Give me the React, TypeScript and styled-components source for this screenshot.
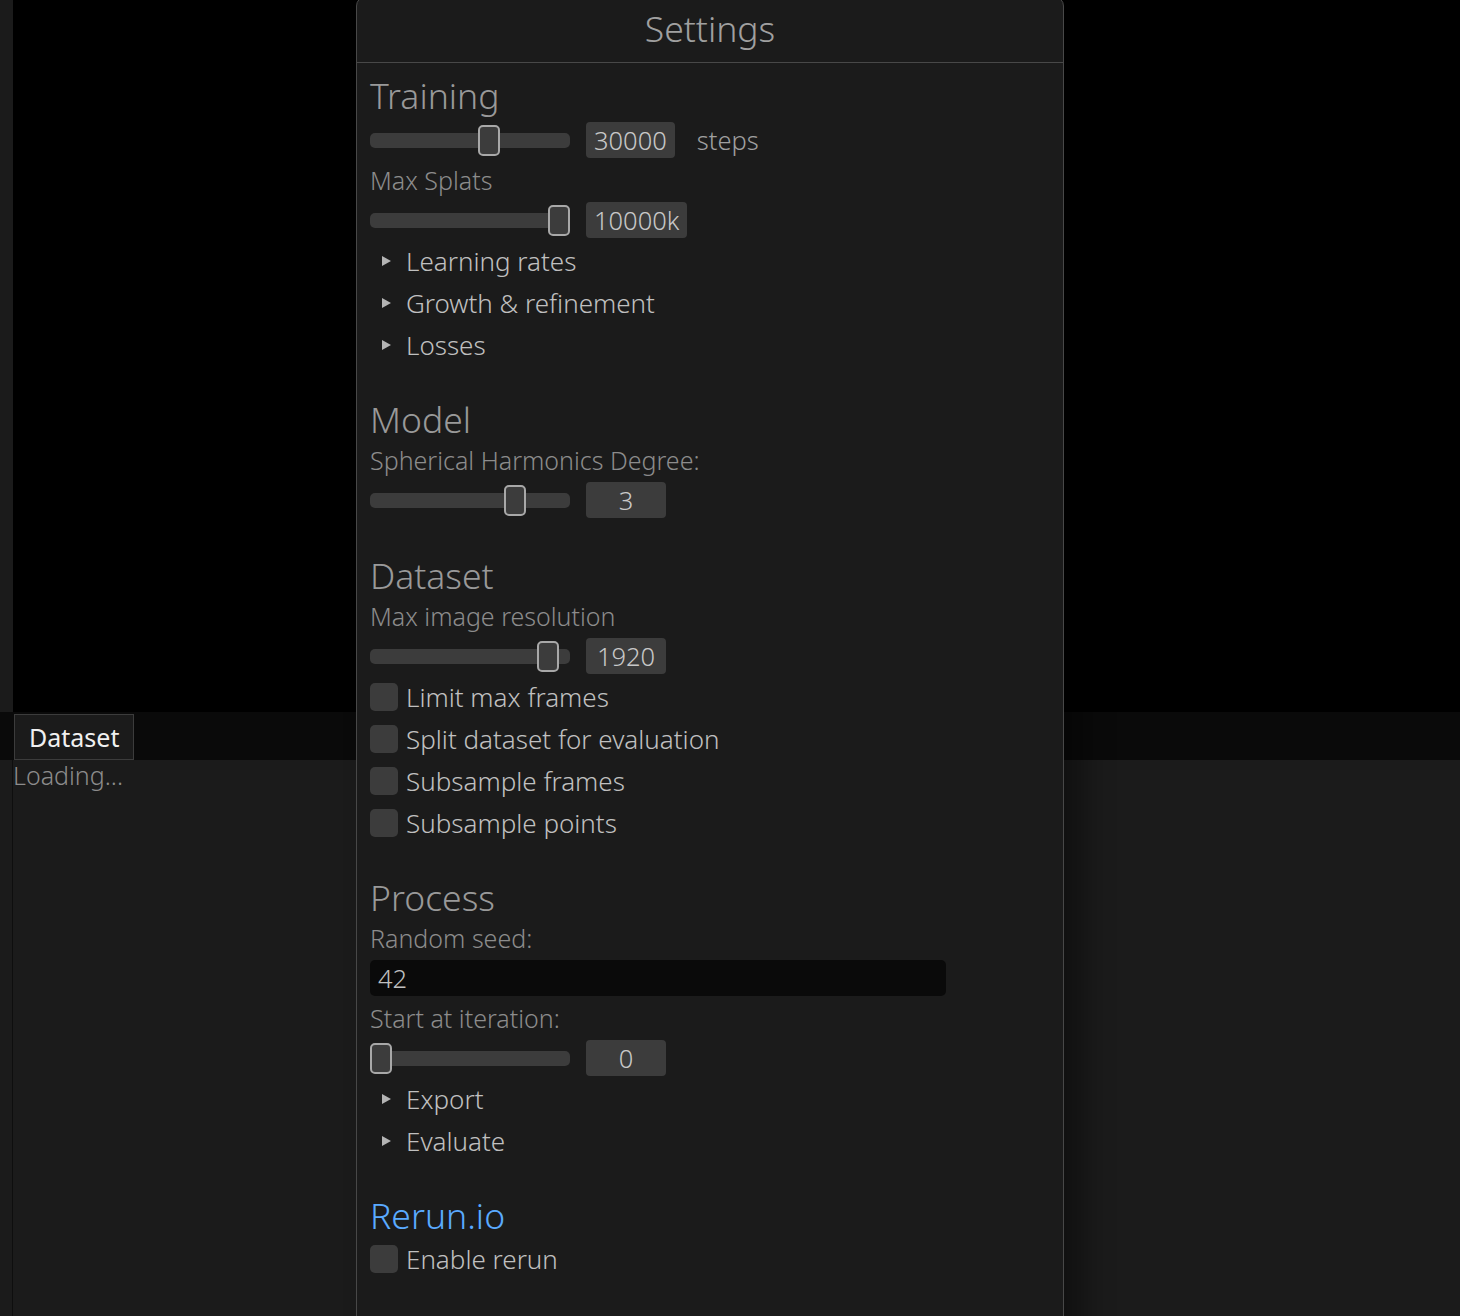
import React, {FC} from 'react';
import styled, {createGlobalStyle} from 'styled-components';

const FONT = `"Noto Sans", "Open Sans", "DejaVu Sans", sans-serif`;

const GlobalStyle = createGlobalStyle`
  html, body {
    margin: 0;
    padding: 0;
    background: #000;
    overflow: hidden;
  }
  * {
    box-sizing: border-box;
  }
`;

type SliderProps = { frac: number; value: string; unit?: string };

const Slider: FC<SliderProps> = ({frac, value, unit}) => (
    <SliderRow>
        <Track>
            <Handle style={{left: `${frac * 178}px`}}/>
        </Track>
        <ValueBox>{value}</ValueBox>
        {unit && <Unit>{unit}</Unit>}
    </SliderRow>
);

const Collapsing: FC<{ title: string }> = ({title}) => (
    <CollapseRow>
        <Arrow/>
        <WidgetText>{title}</WidgetText>
    </CollapseRow>
);

const Check: FC<{ label: string }> = ({label}) => (
    <CheckRow>
        <CheckBox/>
        <WidgetText>{label}</WidgetText>
    </CheckRow>
);

const App: FC = () => {
    return (
        <>
            <GlobalStyle/>
            <Screen>
                <TopArea>
                    <SideStrip/>
                    <Viewport/>
                </TopArea>
                <TabBar>
                    <Tab>Dataset</Tab>
                </TabBar>
                <BottomArea>
                    <SideStrip $divider/>
                    <DataPanel>
                        <Loading>Loading...</Loading>
                    </DataPanel>
                </BottomArea>

                <Window>
                    <TitleBar>Settings</TitleBar>
                    <Content>
                        <Heading $first>Training</Heading>
                        <Slider frac={0.607} value="30000" unit="steps"/>
                        <Label>Max Splats</Label>
                        <Slider frac={1} value="10000k"/>
                        <Collapsing title="Learning rates"/>
                        <Collapsing title="Growth & refinement"/>
                        <Collapsing title="Losses"/>

                        <Heading>Model</Heading>
                        <Label>Spherical Harmonics Degree:</Label>
                        <Slider frac={0.75} value="3"/>

                        <Heading>Dataset</Heading>
                        <Label>Max image resolution</Label>
                        <Slider frac={0.94} value="1920"/>
                        <Check label="Limit max frames"/>
                        <Check label="Split dataset for evaluation"/>
                        <Check label="Subsample frames"/>
                        <Check label="Subsample points"/>

                        <Heading>Process</Heading>
                        <Label>Random seed:</Label>
                        <TextInput>42</TextInput>
                        <Label>Start at iteration:</Label>
                        <Slider frac={0} value="0"/>
                        <Collapsing title="Export"/>
                        <Collapsing title="Evaluate"/>

                        <Heading $link>Rerun.io</Heading>
                        <Check label="Enable rerun"/>
                    </Content>
                </Window>
            </Screen>
        </>
    );
};

const Screen = styled.div`
  position: relative;
  width: 1460px;
  height: 1316px;
  display: flex;
  flex-direction: column;
  overflow: hidden;
  font-family: ${FONT};
  font-weight: 300;
`;

const TopArea = styled.div`
  height: 712px;
  display: flex;
`;

const SideStrip = styled.div<{ $divider?: boolean }>`
  width: 13px;
  background: #1b1b1b;
  border-right: 1px solid ${p => p.$divider ? '#0e0e0e' : '#1b1b1b'};
`;

const Viewport = styled.div`
  flex: 1;
  background: #000;
`;

const TabBar = styled.div`
  height: 48px;
  background: #0a0a0a;
  display: flex;
  align-items: flex-start;
  padding: 2px 0 0 14px;
`;

const Tab = styled.div`
  height: 46px;
  padding: 0 14px;
  display: flex;
  align-items: center;
  background: #1b1b1b;
  border: 1px solid #3c3c3c;
  color: #f0f0f0;
  font-size: 25px;
  font-weight: 400;
`;

const BottomArea = styled.div`
  flex: 1;
  display: flex;
`;

const DataPanel = styled.div`
  flex: 1;
  background: #1b1b1b;
  padding: 1px 0 0 0;
`;

const Loading = styled.div`
  color: #8c8c8c;
  font-size: 25px;
  line-height: 28px;
`;

const Window = styled.div`
  position: absolute;
  left: 356px;
  top: -4px;
  width: 708px;
  height: 1340px;
  background: #1b1b1b;
  border: 1px solid #484848;
  border-radius: 10px;
  box-shadow: 20px 40px 30px rgba(0, 0, 0, 0.38);
  display: flex;
  flex-direction: column;
`;

const TitleBar = styled.div`
  height: 66px;
  flex-shrink: 0;
  display: flex;
  align-items: center;
  justify-content: center;
  border-bottom: 1px solid #484848;
  color: #a0a0a0;
  font-size: 35.5px;
  padding-bottom: 4px;
`;

const Content = styled.div`
  display: flex;
  flex-direction: column;
  align-items: flex-start;
  gap: 8px;
  padding: 12px 13px;
`;

const Heading = styled.div<{ $first?: boolean; $link?: boolean }>`
  height: 39px;
  display: flex;
  align-items: center;
  margin-top: ${p => p.$first ? 0 : 29}px;
  color: ${p => p.$link ? '#5aaaff' : '#999999'};
  font-size: 35.5px;
`;

const Label = styled.div`
  height: 28px;
  display: flex;
  align-items: center;
  color: #8c8c8c;
  font-size: 25px;
`;

const SliderRow = styled.div`
  height: 36px;
  display: flex;
  align-items: center;
`;

const Track = styled.div`
  position: relative;
  width: 200px;
  height: 15px;
  border-radius: 5px;
  background: #3c3c3c;
`;

const Handle = styled.div`
  position: absolute;
  top: -8px;
  width: 22px;
  height: 31px;
  border-radius: 5px;
  border: 2px solid #a8a8a8;
  background: #3c3c3c;
`;

const ValueBox = styled.div`
  margin-left: 16px;
  min-width: 80px;
  height: 36px;
  padding: 0 8px;
  border-radius: 4px;
  background: #3c3c3c;
  color: #c8c8c8;
  font-size: 25.5px;
  display: flex;
  align-items: center;
  justify-content: center;
`;

const Unit = styled.div`
  margin-left: 22px;
  color: #a0a0a0;
  font-size: 25.5px;
`;

const CollapseRow = styled.div`
  height: 34px;
  display: flex;
  align-items: center;

  ${SliderRow} + & {
    margin-top: -2px;
  }
`;

const Arrow = styled.div`
  width: 0;
  height: 0;
  margin: 0 15px 0 12px;
  border-top: 5px solid transparent;
  border-bottom: 5px solid transparent;
  border-left: 9px solid #b4b4b4;
`;

const WidgetText = styled.span`
  color: #c0c0c0;
  font-size: 26px;
`;

const CheckRow = styled.div`
  height: 34px;
  display: flex;
  align-items: center;
  gap: 8px;

  ${SliderRow} + & {
    margin-top: -2px;
  }
`;

const CheckBox = styled.div`
  width: 28px;
  height: 28px;
  border-radius: 5px;
  background: #3c3c3c;
`;

const TextInput = styled.div`
  width: 576px;
  height: 36px;
  border-radius: 5px;
  background: #0a0a0a;
  color: #c0c0c0;
  font-size: 25.5px;
  padding: 0 8px;
  display: flex;
  align-items: center;
`;

export default App;
